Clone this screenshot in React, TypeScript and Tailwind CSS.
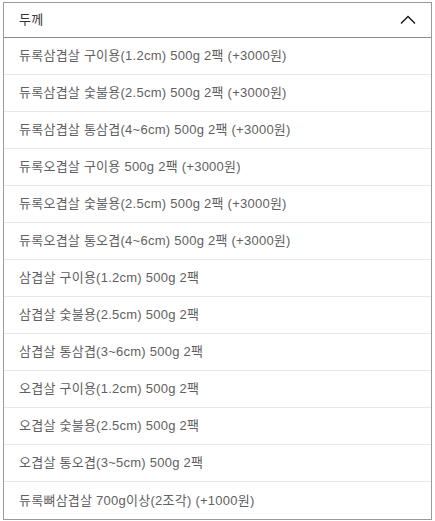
import React from "react";

const items = [
  "듀록삼겹살 구이용(1.2cm) 500g 2팩 (+3000원)",
  "듀록삼겹살 숯불용(2.5cm) 500g 2팩 (+3000원)",
  "듀록삼겹살 통삼겹(4~6cm) 500g 2팩 (+3000원)",
  "듀록오겹살 구이용 500g 2팩 (+3000원)",
  "듀록오겹살 숯불용(2.5cm) 500g 2팩 (+3000원)",
  "듀록오겹살 통오겹(4~6cm) 500g 2팩 (+3000원)",
  "삼겹살 구이용(1.2cm) 500g 2팩",
  "삼겹살 숯불용(2.5cm) 500g 2팩",
  "삼겹살 통삼겹(3~6cm) 500g 2팩",
  "오겹살 구이용(1.2cm) 500g 2팩",
  "오겹살 숯불용(2.5cm) 500g 2팩",
  "오겹살 통오겹(3~5cm) 500g 2팩",
  "듀록뼈삼겹살 700g이상(2조각) (+1000원)",
];

export default function App() {
  return (
    <div
      className="w-[435px] h-[521px] bg-white pt-[2px] pl-[3px]"
      style={{ fontFamily: '"Liberation Sans", "Noto Sans CJK KR", sans-serif' }}
    >
      <div className="w-[429px] border border-[#9a9a9a] bg-white">
        <div className="flex h-[35px] items-center justify-between border-b border-[#8a8a8a] pl-[15px] pr-[14px]">
          <span className="text-[13px] tracking-[0.25px] text-[#333]">두께</span>
          <svg width="16" height="10" viewBox="0 0 16 10" className="mr-[1px]">
            <path d="M1 8.5 L8 1.5 L15 8.5" fill="none" stroke="#111" strokeWidth="1.3" />
          </svg>
        </div>
        <div className="flex flex-col">
          {items.map((t, i) => (
            <div
              key={i}
              className={`flex h-[37px] items-center pl-[15px] text-[13px] tracking-[0.25px] text-[#5f5f5f] ${
                i < items.length - 1 ? "border-b border-[#e8e8e8]" : ""
              }`}
            >
              {t}
            </div>
          ))}
        </div>
      </div>
    </div>
  );
}
